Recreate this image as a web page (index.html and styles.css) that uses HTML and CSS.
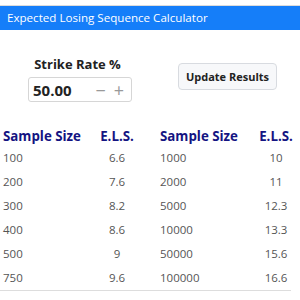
FILE: index.html
```html
<!DOCTYPE html>
<html>
<head>
<meta charset="utf-8">
<link rel="stylesheet" href="styles.css">
</head>
<body>
<div class="widget">
  <div class="title">Expected Losing Sequence Calculator</div>
  <div class="controls">
    <div class="rate">
      <div class="label">Strike Rate %</div>
      <div class="spin">
        <span class="value">50.00</span>
        <span class="steps"><span class="step">−</span><span class="step">+</span></span>
      </div>
    </div>
    <div class="action">
      <button class="btn">Update Results</button>
    </div>
  </div>
  <div class="table">
    <div class="th c1">Sample Size</div><div class="th c2">E.L.S.</div><div class="th c3">Sample Size</div><div class="th c4">E.L.S.</div>
    <div class="td c1">100</div><div class="td c2">6.6</div><div class="td c3">1000</div><div class="td c4">10</div>
    <div class="td c1">200</div><div class="td c2">7.6</div><div class="td c3">2000</div><div class="td c4">11</div>
    <div class="td c1">300</div><div class="td c2">8.2</div><div class="td c3">5000</div><div class="td c4">12.3</div>
    <div class="td c1">400</div><div class="td c2">8.6</div><div class="td c3">10000</div><div class="td c4">13.3</div>
    <div class="td c1">500</div><div class="td c2">9</div><div class="td c3">50000</div><div class="td c4">15.6</div>
    <div class="td c1">750</div><div class="td c2">9.6</div><div class="td c3">100000</div><div class="td c4">16.6</div>
  </div>
</div>
</body>
</html>
```
FILE: styles.css
```css
html, body {
  margin: 0;
  padding: 0;
  background: #ffffff;
}
body {
  font-family: "Open Sans", "Noto Sans", sans-serif;
  color: #555;
}
.widget {
  padding-top: 5px;
}
.title {
  border-top: 1px solid #dcdcdc;
  background: #157ef9;
  color: #fff;
  font-size: 11.6px;
  height: 24px;
  line-height: 24px;
  padding-left: 7px;
}
.controls {
  display: grid;
  grid-template-columns: 155px 145px;
  height: 92px;
}
.rate {
  display: flex;
  flex-direction: column;
  align-items: center;
  padding-top: 25px;
}
.label {
  font-weight: bold;
  font-size: 13px;
  color: #222;
  line-height: 18px;
}
.spin {
  margin-top: 4px;
  margin-left: 5px;
  width: 104px;
  height: 25px;
  box-sizing: border-box;
  border: 1px solid #d6d6d6;
  border-radius: 3px;
  display: flex;
  align-items: center;
  justify-content: space-between;
  padding: 0 7px 0 4px;
}
.value {
  font-weight: bold;
  font-size: 15px;
  color: #222;
}
.steps {
  display: flex;
  gap: 8px;
  color: #999;
  font-size: 18px;
  line-height: 18px;
}
.action {
  display: flex;
  justify-content: center;
  padding-top: 33px;
}
.btn {
  width: 99px;
  height: 27px;
  font-family: inherit;
  font-weight: bold;
  font-size: 11px;
  color: #222;
  background: #f7f8fa;
  border: 1px solid #d8dbe0;
  border-radius: 4px;
  padding: 0;
}
.table {
  display: grid;
  grid-template-columns: 94px 46px 112px 48px;
  border-bottom: 1px solid #dddddd;
  margin-right: 9px;
}
.th {
  font-weight: bold;
  font-size: 13.3px;
  color: #141482;
  height: 24px;
  padding-top: 4px;
  box-sizing: border-box;
  line-height: 20px;
}
.td {
  font-size: 11.5px;
  height: 24px;
  line-height: 24px;
}
.c1 { padding-left: 3px; }
.c2 { text-align: center; }
.c3 { padding-left: 20px; }
.c4 { text-align: center; }
```
